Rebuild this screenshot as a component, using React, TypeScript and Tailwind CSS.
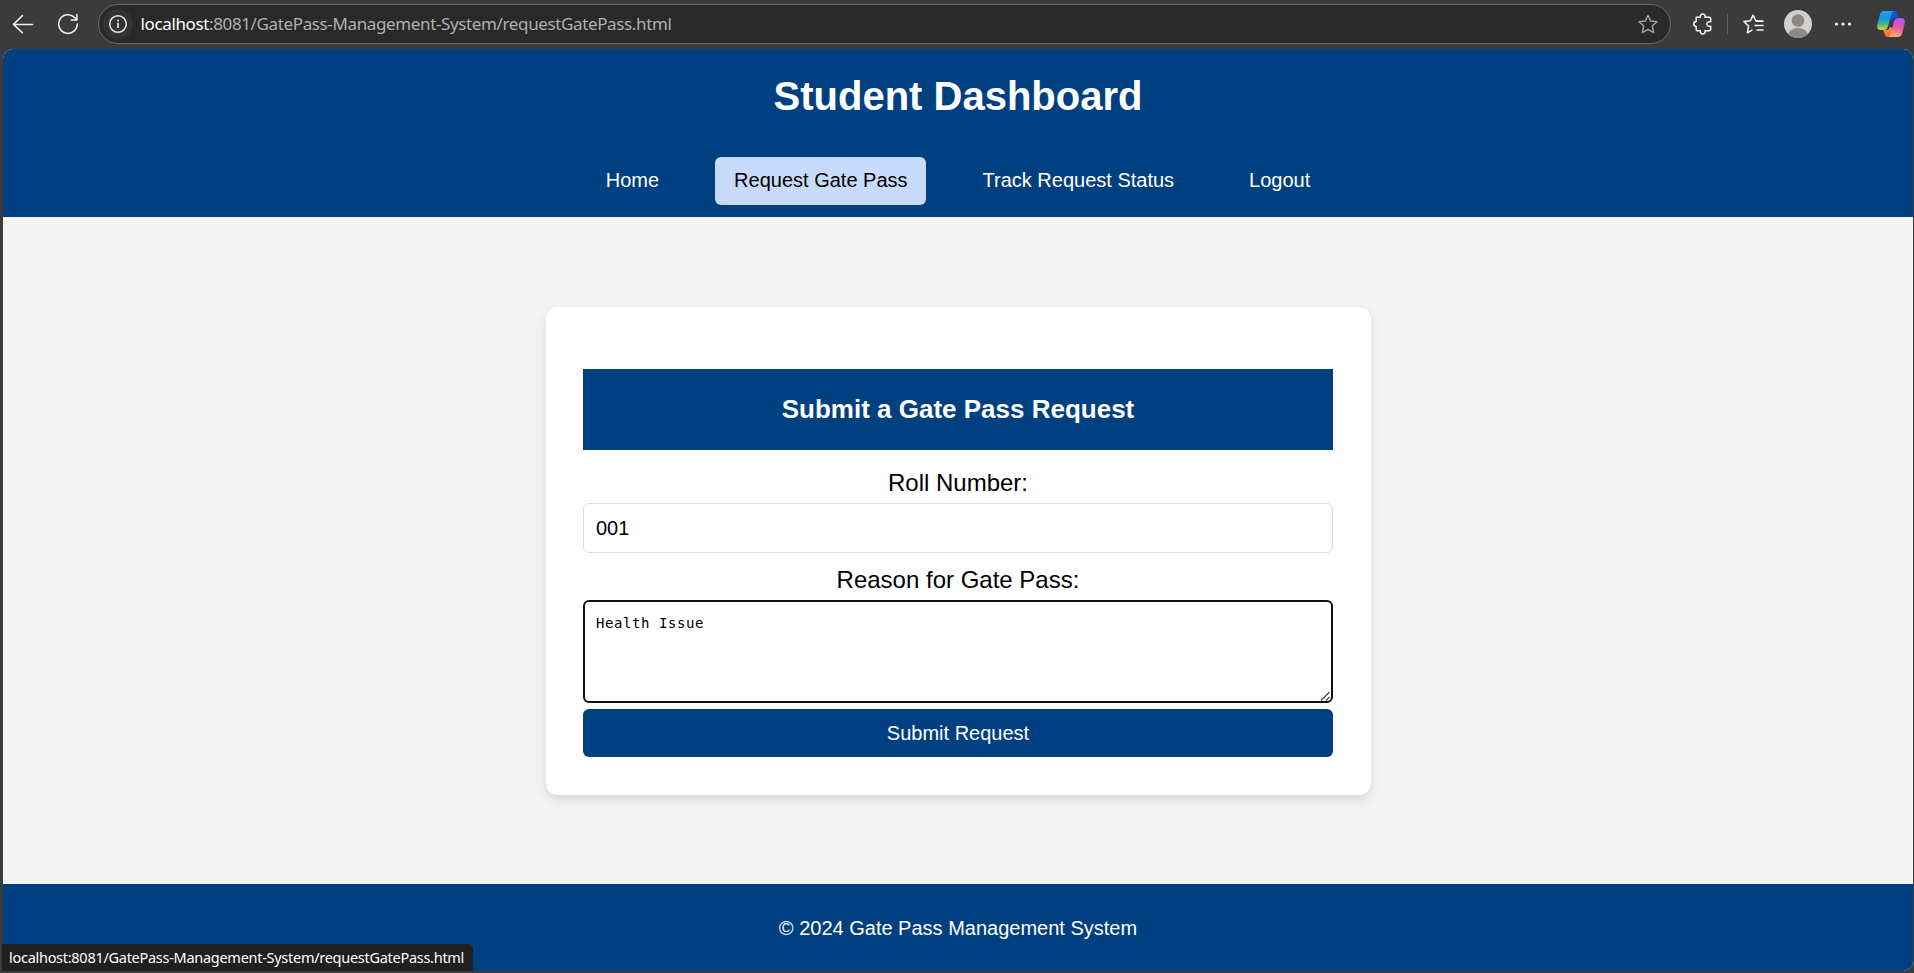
import React from "react";

const URL_HOST = "localhost";
const URL_REST = ":8081/GatePass-Management-System/requestGatePass.html";

const STAR = "M10 1.2 L12.6 7 L19 7.7 L14.3 12 L15.6 18.6 L10 15.4 L4.4 18.6 L5.7 12 L1 7.7 L7.4 7 Z";

function BackIcon() {
  return (
    <svg width="22" height="20" viewBox="0 0 22 20" fill="none" stroke="#f2f2f2" strokeWidth="1.5" strokeLinecap="round" strokeLinejoin="round">
      <path d="M20.5 10.4H1.6M10.4 1.6L1.5 10.4l8.9 8.4" />
    </svg>
  );
}

function ReloadIcon() {
  return (
    <svg width="22" height="22" viewBox="0 0 22 22" fill="none" stroke="#f2f2f2" strokeWidth="1.5" strokeLinecap="round" strokeLinejoin="round">
      <path d="M20.3 11A9.3 9.3 0 1 1 17.6 4.5L19.6 6.6" />
      <path d="M19.9 1.4V6.9H14.2" />
    </svg>
  );
}

function InfoIcon() {
  return (
    <svg width="20" height="20" viewBox="0 0 20 20" fill="none" stroke="#e6e6e6">
      <circle cx="10" cy="10" r="8.3" strokeWidth="1.5" />
      <path d="M10 8.8V14" strokeWidth="1.7" />
      <circle cx="10" cy="6.4" r="1" fill="#e6e6e6" stroke="none" />
    </svg>
  );
}

function PuzzleIcon() {
  return (
    <svg width="20" height="22" viewBox="0 0 20 22" fill="none" stroke="#f5f5f5" strokeWidth="1.5" strokeLinejoin="round">
      <path d="M3.2 4.3H7.4C7 1.9 8.2 1 9.7 1S12.4 1.9 12 4.3H16.2C17.2 4.3 17.7 4.9 17.7 5.8V8.7C14.6 8.4 13.9 9.8 13.9 11S14.6 13.6 17.7 13.3V16.3C17.7 17.2 17.2 17.8 16.2 17.8H12C12.4 20.1 11.2 21 9.7 21S7 20.1 7.4 17.8H4.7C3.7 17.8 3.2 17.2 3.2 16.3V13.4C1.5 13.4 .8 12.3 .8 11S1.5 8.6 3.2 8.6Z" />
    </svg>
  );
}

function FavoritesIcon() {
  return (
    <svg width="21" height="21" viewBox="0 0 21 21" fill="none" stroke="#f5f5f5" strokeWidth="1.5" strokeLinecap="round" strokeLinejoin="round">
      <path d="M19.5 7.2L12.7 6.7 10 1.2 7.4 6.7 1 7.6 5.6 12 4.4 18.8 9 16.2" />
      <path d="M13.5 7.3H20M12 11.6H20M14 16H20" />
    </svg>
  );
}

function CopilotIcon() {
  return (
    <svg width="30" height="28" viewBox="0 0 30 28">
      <defs>
        <linearGradient id="cpLeft" x1="0" y1="0" x2="0" y2="1">
          <stop offset="0" stopColor="#1aa8f0" />
          <stop offset=".35" stopColor="#1790e6" />
          <stop offset=".7" stopColor="#45b98d" />
          <stop offset="1" stopColor="#f2d21b" />
        </linearGradient>
        <linearGradient id="cpRight" x1=".5" y1="0" x2=".4" y2="1">
          <stop offset="0" stopColor="#a657ee" />
          <stop offset=".45" stopColor="#e656b0" />
          <stop offset="1" stopColor="#ffad62" />
        </linearGradient>
        <linearGradient id="cpTop" x1="0" y1="0" x2="1" y2="1">
          <stop offset="0" stopColor="#1769e0" />
          <stop offset="1" stopColor="#153fb8" />
        </linearGradient>
        <linearGradient id="cpBottom" x1="0" y1="0" x2="1" y2="1">
          <stop offset="0" stopColor="#ffb03a" />
          <stop offset="1" stopColor="#ee4545" />
        </linearGradient>
      </defs>
      <path d="M13 1H18.2C20 1 20.8 2 21.4 4L22.6 8H19.5C17.7 8 16.8 9 16.2 11L11 9Z" fill="url(#cpTop)" />
      <path d="M17 27H11.8C10 27 9.2 26 8.6 24L7.4 20H10.5C12.3 20 13.2 19 13.8 17L19 19Z" fill="url(#cpBottom)" />
      <path d="M8.2 1H18.4C16.6 1 15.9 2.4 15.2 4.8L12.4 15.2C11.6 18.2 10.4 20 7.6 20H4.5C1.5 20 .6 17.5 1.4 14.3L3.8 5C4.5 2.4 5.9 1 8.2 1Z" fill="url(#cpLeft)" />
      <path d="M21.8 27H11.6C13.4 27 14.1 25.6 14.8 23.2L17.6 12.8C18.4 9.8 19.6 8 22.4 8H25.5C28.5 8 29.4 10.5 28.6 13.7L26.2 23C25.5 25.6 24.1 27 21.8 27Z" fill="url(#cpRight)" />
    </svg>
  );
}

function BrowserBar() {
  return (
    <div className="flex h-[49px] shrink-0 items-start bg-[#3b3b3b]">
      <div className="flex h-12 w-[98px] items-center gap-[23px] pl-[12px]">
        <BackIcon />
        <ReloadIcon />
      </div>
      <div className="mt-1 flex h-10 w-[1573px] items-center rounded-full border border-[#6c6c6c] bg-[#292929] pr-[12px] pl-[4px] font-['Noto_Sans'] text-[17px]">
        <span className="flex size-[30px] items-center justify-center rounded-full bg-[#333333]">
          <InfoIcon />
        </span>
        <span className="ml-[7.5px] flex-1 tracking-[-0.37px] whitespace-nowrap text-[#b0b0b0]">
          <span className="text-white">{URL_HOST}</span>
          {URL_REST}
        </span>
        <svg width="20" height="20" viewBox="0 0 20 20" fill="none" stroke="#a3a3a3" strokeWidth="1.4" strokeLinejoin="round">
          <path d={STAR} />
        </svg>
      </div>
      <div className="flex h-12 items-center pl-[22px]">
        <PuzzleIcon />
        <span className="ml-[14px] h-5 w-px bg-[#616161]" />
        <span className="ml-[15px]">
          <FavoritesIcon />
        </span>
        <svg className="ml-[20px]" width="28" height="28" viewBox="0 0 28 28">
          <clipPath id="avatar">
            <circle cx="14" cy="14" r="14" />
          </clipPath>
          <g clipPath="url(#avatar)">
            <rect width="28" height="28" fill="#d2d0ce" />
            <circle cx="14" cy="10.5" r="6.3" fill="#8b8885" />
            <ellipse cx="14" cy="26" rx="10" ry="8" fill="#8b8885" />
          </g>
        </svg>
        <svg className="ml-[22px]" width="18" height="4" viewBox="0 0 18 4" fill="#f5f5f5">
          <circle cx="2.5" cy="2" r="1.6" />
          <circle cx="9" cy="2" r="1.6" />
          <circle cx="15.5" cy="2" r="1.6" />
        </svg>
        <span className="ml-[24px]">
          <CopilotIcon />
        </span>
      </div>
    </div>
  );
}

const NAV = [
  { label: "Home", active: false },
  { label: "Request Gate Pass", active: true },
  { label: "Track Request Status", active: false },
  { label: "Logout", active: false },
];

function Header() {
  return (
    <header className="flex h-[168px] flex-col items-center bg-[#004080] pt-[24px] text-white">
      <h1 className="text-[40px] leading-[46px] font-bold">Student Dashboard</h1>
      <nav className="mt-[38px] flex gap-[37.5px]">
        {NAV.map((item) => (
          <a
            key={item.label}
            className={
              item.active
                ? "flex h-12 items-center rounded-[6px] bg-[#c9dbfb] px-[18.75px] pb-[2px] text-xl text-black"
                : "flex h-12 items-center px-[18.75px] pb-[2px] text-xl"
            }
          >
            {item.label}
          </a>
        ))}
      </nav>
    </header>
  );
}

function RequestForm() {
  return (
    <form className="flex h-[488px] w-[825px] flex-col rounded-[12px] bg-white px-[37.5px] pt-[62px] shadow-[0_5px_12px_rgba(0,0,0,0.12)]">
      <h2 className="flex h-[81px] items-center justify-center bg-[#004080] text-[26px] font-bold text-white">
        Submit a Gate Pass Request
      </h2>
      <label className="mt-[19px] text-center text-[24px] leading-7">Roll Number:</label>
      <input
        className="mt-[6px] h-[50px] rounded-[6px] border border-[#dddddd] px-[12px] text-xl outline-none"
        defaultValue="001"
      />
      <label className="mt-[13px] text-center text-[24px] leading-7">Reason for Gate Pass:</label>
      <div className="relative mt-[6px] flex h-[103px] shrink-0">
        <textarea
          className="flex-1 resize-none rounded-[6px] border-2 border-[#101010] px-[11px] py-[12px] font-['DejaVu_Sans_Mono'] text-[14px] leading-[19px] tracking-[0.57px] outline-none"
          defaultValue="Health Issue"
        />
        <svg className="absolute right-[2px] bottom-[1px]" width="11" height="11" viewBox="0 0 11 11" stroke="#4a4a4a" strokeWidth="1.3">
          <path d="M1 9.5L9.5 1M6 9.5L9.5 6" />
        </svg>
      </div>
      <button type="button" className="mt-[6px] h-12 rounded-[6px] bg-[#004080] pb-px text-xl text-white">
        Submit Request
      </button>
    </form>
  );
}

export default function App() {
  return (
    <div className="relative flex h-[973px] w-[1914px] flex-col overflow-hidden bg-[#3b3b3b] font-['Liberation_Sans',sans-serif] text-black">
      <BrowserBar />
      <div className="mr-px ml-[3px] flex h-[922px] flex-col overflow-hidden rounded-t-[10px] rounded-b-[10px] bg-[#f4f4f4]">
        <Header />
        <main className="flex h-[667px] justify-center pt-[90px]">
          <RequestForm />
        </main>
        <footer className="flex flex-1 items-center justify-center bg-[#004080] text-xl text-white">
          © 2024 Gate Pass Management System
        </footer>
      </div>
      <div className="absolute bottom-[2px] left-[2px] flex h-[27px] w-[471px] items-center rounded-tr-[5px] bg-[#202020] pl-[7px] font-['Noto_Sans'] text-[14.5px] tracking-[-0.28px] whitespace-nowrap text-white">
        {URL_HOST}
        {URL_REST}
      </div>
    </div>
  );
}
